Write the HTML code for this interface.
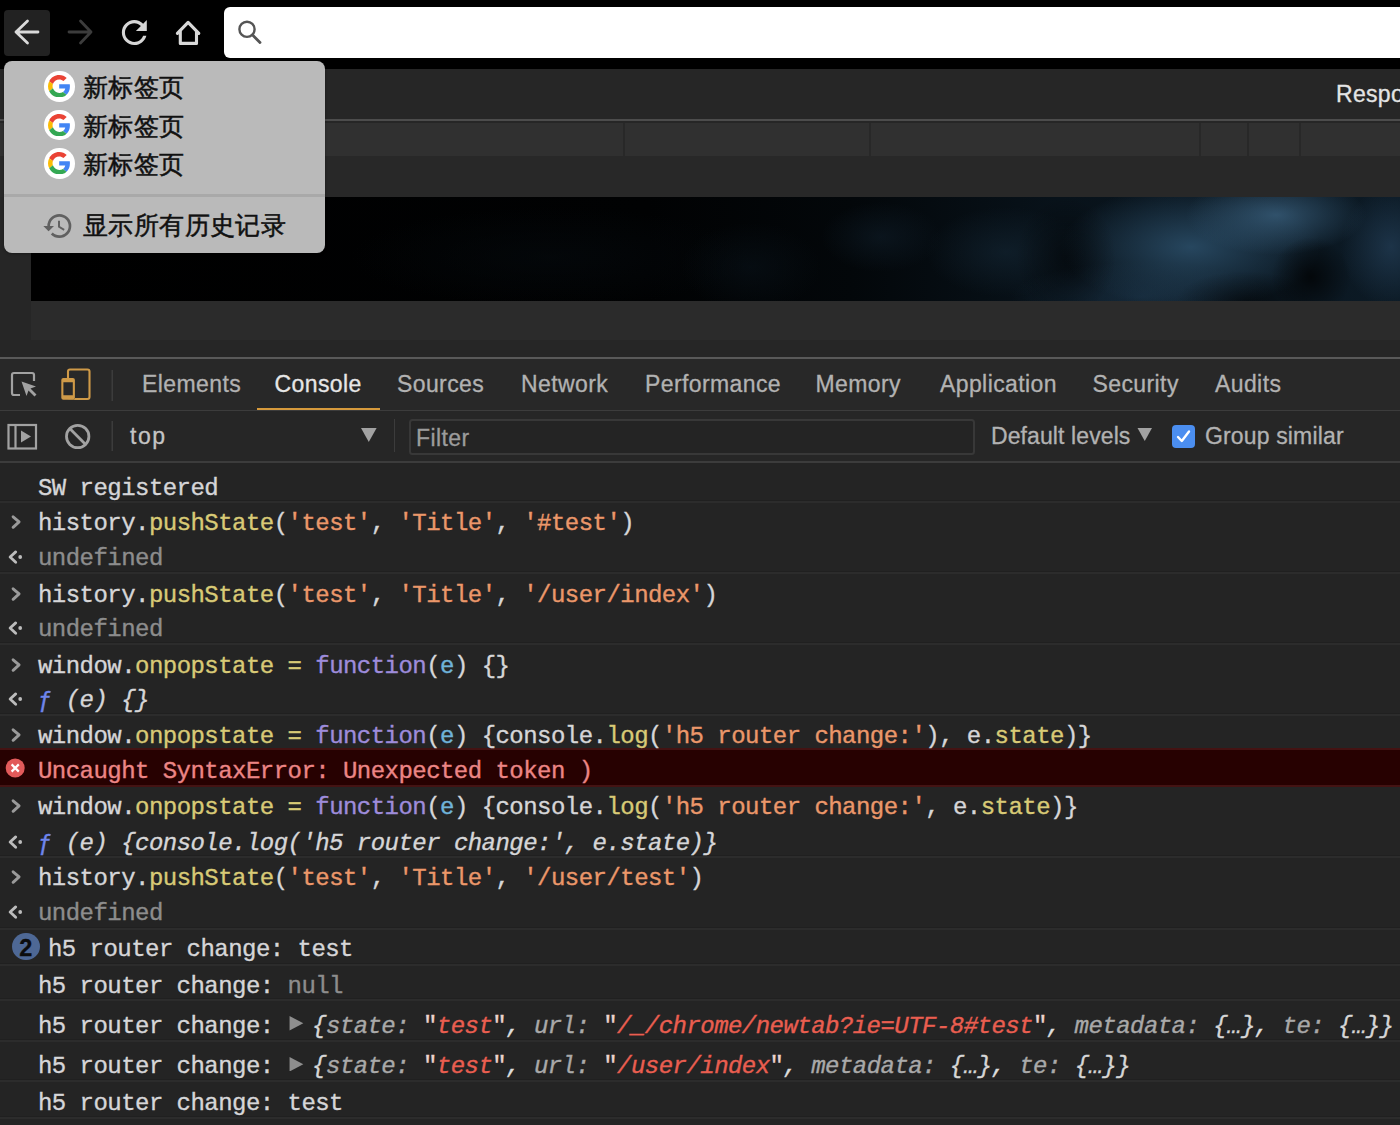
<!DOCTYPE html>
<html><head><meta charset="utf-8">
<style>
*{margin:0;padding:0;box-sizing:border-box}
html,body{width:1400px;height:1125px;overflow:hidden;background:#242424;font-family:"Liberation Sans",sans-serif}
.a{position:absolute}
.mono{font-family:"Liberation Mono",monospace;font-size:24px;letter-spacing:-0.54px;white-space:pre;line-height:26px;-webkit-text-stroke:0.35px currentColor}
.ln{position:absolute;color:#d6d6d8}
.sep{position:absolute;left:0;width:1400px;height:1px;background:#363636}
.wt{color:#d6d6d8}
.pr{color:#d8ca76}.st{color:#eb976a}.kw{color:#9e8cdb}.vr{color:#6fb3d9}.gy{color:#8d8d8d}
.fn{color:#6f86ec}
.it{font-style:italic;color:#d6d6d8}
.er{color:#ec8585}
.ok{color:#a9a9a9;font-style:italic}.oc{color:#dcdcdc;font-style:italic}.oq{color:#ecd3cd}.os{color:#ea5e50;font-style:italic}.ob{color:#d6d6d6;font-style:italic}
.tri{display:inline-block;width:24.5px;height:14.5px;vertical-align:2px;background:#8e8e8e;clip-path:polygon(2px 0,15.8px 7.25px,2px 14.5px)}
.tab{position:absolute;top:370.5px;font-size:23px;color:#b2b2b2;line-height:26px;white-space:pre;letter-spacing:0.4px;-webkit-text-stroke:0.3px currentColor}
.tb{font-size:23px;color:#b2b2b2;line-height:26px;white-space:pre;-webkit-text-stroke:0.3px currentColor}
.cn{font-size:25.2px;letter-spacing:0.4px;color:#111;line-height:30px;white-space:pre;-webkit-text-stroke:0.5px #111}
</style></head><body>
<div class="a" style="left:0;top:0;width:1400px;height:69px;background:#000"></div>
<div class="a" style="left:0;top:69px;width:1400px;height:288px;background:#262626"></div>
<!-- TOP BAR -->
<div class="a" style="left:4px;top:10px;width:46px;height:46px;background:#222;border-radius:4px"></div>
<svg class="a" style="left:0;top:0" width="224" height="69" viewBox="0 0 224 69">
 <g fill="none" stroke-width="2.8" stroke-linecap="round" stroke-linejoin="round">
  <path d="M16 32H38M27.5 21L16 32L27.5 43" stroke="#dadada"/>
  <path d="M69 32H91M80.5 21L91 32L80.5 43" stroke="#3c3c3c"/>
 </g>
 <g transform="translate(115.6,13.8) scale(1.56)" fill="#d6d6d6">
  <path d="M17.65 6.35C16.2 4.9 14.21 4 12 4c-4.42 0-7.99 3.580-7.990 8s3.570 8 7.990 8c3.730 0 6.840-2.550 7.730-6h-2.080c-.820 2.330-3.040 4-5.650 4-3.310 0-6-2.690-6-6s2.690-6 6-6c1.660 0 3.140.690 4.220 1.780L13 11h7V4l-2.350 2.350z"/>
 </g>
 <g fill="none" stroke="#d9d9d9" stroke-width="3.1" stroke-linecap="round" stroke-linejoin="round"><path d="M177.4 33.4L188.1 22.3L198.8 33.4"/><path d="M180.3 31.5V43.4H196.5V31.5"/></g>
</svg>
<div class="a" style="left:224px;top:7px;width:1200px;height:51px;background:#fff;border-radius:6px"></div>
<svg class="a" style="left:230px;top:14px" width="40" height="40" viewBox="230 14 40 40">
 <circle cx="247" cy="29.3" r="7.6" fill="none" stroke="#555" stroke-width="2.4"/>
 <path d="M252.6 35L260 42.6" stroke="#555" stroke-width="2.8" stroke-linecap="round"/>
</svg>

<!-- PAGE -->
<div class="a" style="left:0;top:119px;width:1400px;height:2.2px;background:#4c4c4c"></div>
<div class="a" style="left:0;top:123px;width:1400px;height:33px;background:#303030"></div>

<div class="a" style="left:623px;top:123px;width:2px;height:33px;background:#282828"></div>
<div class="a" style="left:869px;top:123px;width:2px;height:33px;background:#282828"></div>
<div class="a" style="left:1199px;top:123px;width:2px;height:33px;background:#282828"></div>
<div class="a" style="left:1247px;top:123px;width:2px;height:33px;background:#282828"></div>
<div class="a" style="left:1299px;top:123px;width:2px;height:33px;background:#282828"></div>
<div class="a" style="left:0;top:156px;width:1400px;height:41px;background:#282828"></div>
<div class="a" style="left:1336px;top:81px;font-size:23px;color:#e4e4e4;line-height:26px;letter-spacing:0.3px;-webkit-text-stroke:0.3px #e4e4e4">Respo</div>
<div class="a" style="left:31px;top:197px;width:1369px;height:104px;background:
 radial-gradient(40px 40px at 1280px 80px, rgba(0,0,0,.7), rgba(0,0,0,0)),
 radial-gradient(70px 30px at 1215px 104px, rgba(0,0,0,.5), rgba(0,0,0,0)),
 radial-gradient(50px 60px at 1035px 60px, rgba(0,0,0,.45), rgba(0,0,0,0)),
 radial-gradient(90px 40px at 1245px 18px, rgba(54,90,118,.85), rgba(54,90,118,0)),
 radial-gradient(130px 62px at 1160px 50px, rgba(42,76,102,.9), rgba(42,76,102,0)),
 radial-gradient(130px 35px at 1110px 100px, rgba(30,56,78,.6), rgba(30,56,78,0)),
 radial-gradient(50px 60px at 1360px 50px, rgba(34,60,84,.75), rgba(34,60,84,0)),
 radial-gradient(80px 45px at 975px 55px, rgba(20,38,52,.6), rgba(20,38,52,0)),
 radial-gradient(60px 35px at 850px 40px, rgba(16,30,42,.55), rgba(16,30,42,0)),
 radial-gradient(70px 45px at 720px 70px, rgba(10,20,28,.5), rgba(10,20,28,0)),
 radial-gradient(200px 50px at 520px 60px, rgba(5,10,14,.6), rgba(5,10,14,0)),
 linear-gradient(90deg,#000 0%,#010203 45%,#03070a 60%,#08121a 75%,#0c1a25 100%)"></div>
<div class="a" style="left:31px;top:301px;width:1369px;height:39px;background:#2b2b2b"></div>
<!-- MENU -->
<div class="a" style="left:4px;top:61px;width:321px;height:192px;background:#bababa;border-radius:8px;box-shadow:0 1px 3px rgba(0,0,0,.3)"></div>
<div class="a" style="left:4px;top:194px;width:321px;height:3px;background:#a9a9a9"></div>

<svg width="0" height="0" style="position:absolute"><defs>
<symbol id="g" viewBox="0 0 48 48">
<path fill="#EA4335" d="M24 9.5c3.54 0 6.71 1.22 9.21 3.6l6.85-6.85C35.9 2.38 30.47 0 24 0 14.62 0 6.51 5.38 2.56 13.22l7.98 6.19C12.43 13.72 17.74 9.5 24 9.5z"/>
<path fill="#4285F4" d="M46.98 24.55c0-1.57-.15-3.09-.38-4.55H24v9.02h12.94c-.58 2.960-2.260 5.480-4.780 7.180l7.730 6c4.510-4.180 7.090-10.360 7.090-17.650z"/>
<path fill="#FBBC05" d="M10.53 28.59c-.48-1.45-.76-2.99-.76-4.59s.27-3.14.76-4.59l-7.98-6.19C.92 16.46 0 20.12 0 24c0 3.88.92 7.54 2.56 10.78l7.97-6.19z"/>
<path fill="#34A853" d="M24 48c6.48 0 11.93-2.13 15.89-5.81l-7.73-6c-2.15 1.45-4.92 2.3-8.16 2.3-6.26 0-11.57-4.22-13.47-9.91l-7.98 6.19C6.51 42.62 14.62 48 24 48z"/>
</symbol></defs></svg>
<div class="a" style="left:44px;top:71px;width:30.6px;height:30.6px;border-radius:50%;background:#fff"></div>
<svg class="a" style="left:48.3px;top:75px" width="22.4" height="22.4"><use href="#g"/></svg>
<div class="a" style="left:44px;top:109.5px;width:30.6px;height:30.6px;border-radius:50%;background:#fff"></div>
<svg class="a" style="left:48.3px;top:113.5px" width="22.4" height="22.4"><use href="#g"/></svg>
<div class="a" style="left:44px;top:148px;width:30.6px;height:30.6px;border-radius:50%;background:#fff"></div>
<svg class="a" style="left:48.3px;top:152px" width="22.4" height="22.4"><use href="#g"/></svg>
<div class="a cn" style="left:83px;top:72px">新标签页</div>
<div class="a cn" style="left:83px;top:110.5px">新标签页</div>
<div class="a cn" style="left:83px;top:149px">新标签页</div>
<svg class="a" style="left:42px;top:210px" width="32" height="32" viewBox="0 0 24 24">
<path fill="#606060" d="M13 3a9 9 0 0 0-9 9H1l3.89 3.89.07.14L9 12H6c0-3.87 3.13-7 7-7s7 3.13 7 7-3.13 7-7 7c-1.93 0-3.68-.79-4.94-2.06l-1.42 1.42A8.954 8.954 0 0 0 13 21a9 9 0 0 0 0-18zm-1 5v5l4.28 2.54.72-1.21-3.5-2.08V8H12z"/>
</svg>
<div class="a cn" style="left:83px;top:209.5px">显示所有历史记录</div>

<!-- DEVTOOLS -->
<div class="a" style="left:0;top:359px;width:1400px;height:51px;background:#282828"></div>
<div class="a" style="left:0;top:411px;width:1400px;height:50px;background:#262626"></div>
<div class="a" style="left:0;top:357px;width:1400px;height:2px;background:#595959"></div>
<svg class="a" style="left:0;top:359px" width="120" height="100" viewBox="0 359 120 100">
 <g fill="none" stroke="#a2a2a2" stroke-width="2.2">
  <path d="M20 395H14a2 2 0 0 1-2-2V375a2 2 0 0 1 2-2H32a2 2 0 0 1 2 2V381"/>
 </g>
 <path fill="#a2a2a2" d="M21.5 381.5L36 386.5L30.5 388.5L36.5 394.5L34.5 396.5L28.5 390.5L26.5 396Z"/>
 <rect x="68" y="369.5" width="21.5" height="29.5" rx="2" fill="none" stroke="#cf9a48" stroke-width="2.1"/>
 <rect x="61.3" y="378" width="13.6" height="21.7" rx="2" fill="#282828"/>
 <path fill="#cf9a48" fill-rule="evenodd" d="M63.3 378H72.9A2 2 0 0 1 74.9 380V397.7A2 2 0 0 1 72.9 399.7H63.3A2 2 0 0 1 61.3 397.7V380A2 2 0 0 1 63.3 378Z M63.4 382.2V395.2H72.8V382.2Z"/>
 <rect x="111.5" y="370" width="1.5" height="31" fill="#3c3c3c"/>
 <g fill="none" stroke="#a2a2a2" stroke-width="2.2">
  <rect x="8.5" y="425" width="27.5" height="23.5"/>
  <path d="M15.5 425V448.5"/>
  <circle cx="77.7" cy="436.5" r="11.2" stroke-width="2.8"/>
  <path d="M70 428.8L85.4 444.2" stroke-width="2.8"/>
 </g>
 <path fill="#a2a2a2" d="M21 430.5L31 436.5L21 442.5Z"/>
 <rect x="111.5" y="421" width="1.5" height="30" fill="#3c3c3c"/>
</svg>
<div class="tab" style="left:142px">Elements</div>
<div class="tab" style="left:274.5px;color:#e6e6e6">Console</div>
<div class="tab" style="left:397px">Sources</div>
<div class="tab" style="left:521px">Network</div>
<div class="tab" style="left:645px">Performance</div>
<div class="tab" style="left:815.5px">Memory</div>
<div class="tab" style="left:940px">Application</div>
<div class="tab" style="left:1092.5px">Security</div>
<div class="tab" style="left:1215px">Audits</div>
<div class="a" style="left:257px;top:407.5px;width:123px;height:3px;background:#d69a3c"></div>
<div class="a" style="left:0;top:409.5px;width:1400px;height:1.5px;background:#3c3c3c"></div>
<div class="a tb" style="left:130px;top:422.5px;letter-spacing:1.5px;color:#c4c4c4">top</div>
<svg class="a" style="left:355px;top:420px" width="30" height="30" viewBox="355 420 30 30"><path d="M361 428H376.6L368.8 442Z" fill="#a2a2a2"/></svg>
<div class="a" style="left:393.6px;top:419px;width:1.8px;height:32.5px;background:#3c3c3c"></div>
<div class="a" style="left:408.8px;top:418.6px;width:566px;height:36px;border:2px solid #383838;border-radius:3.5px;background:#242424"></div>
<div class="a tb" style="left:416px;top:425px;color:#9c9c9c;letter-spacing:0.4px">Filter</div>
<div class="a tb" style="left:991px;top:423px;letter-spacing:0.1px">Default levels</div>
<svg class="a" style="left:1130px;top:420px" width="30" height="30" viewBox="1130 420 30 30"><path d="M1137.5 428H1152L1144.75 441Z" fill="#a2a2a2"/></svg>
<div class="a" style="left:1171.5px;top:424.5px;width:23px;height:23px;border-radius:4px;background:#4b8ef0"></div>
<svg class="a" style="left:1171.5px;top:424.5px" width="23" height="23" viewBox="0 0 23 23"><path d="M6 12L9.8 16L17 6.5" fill="none" stroke="#fff" stroke-width="2.4" stroke-linecap="round" stroke-linejoin="round"/></svg>
<div class="a tb" style="left:1205px;top:423px;letter-spacing:0.15px">Group similar</div>
<div class="a" style="left:0;top:461px;width:1400px;height:1.5px;background:#3c3c3c"></div>

<!-- CONSOLE -->
<div class="a" style="left:0;top:748.3px;width:1400px;height:39.2px;background:#270101;border-top:2px solid #441313;border-bottom:2px solid #441313"></div>
<div class="sep" style="top:500px;height:1px;background:#202020"></div><div class="sep" style="top:501px;height:2px;background:#2c2c2c"></div>
<div class="sep" style="top:570.5px;height:1px;background:#202020"></div><div class="sep" style="top:571.5px;height:2px;background:#2c2c2c"></div>
<div class="sep" style="top:641.5px;height:1px;background:#202020"></div><div class="sep" style="top:642.5px;height:2px;background:#2c2c2c"></div>
<div class="sep" style="top:712.5px;height:1px;background:#202020"></div><div class="sep" style="top:713.5px;height:2px;background:#2c2c2c"></div>
<div class="sep" style="top:854.5px;height:1px;background:#202020"></div><div class="sep" style="top:855.5px;height:2px;background:#2c2c2c"></div>
<div class="sep" style="top:926.5px;height:1px;background:#202020"></div><div class="sep" style="top:927.5px;height:2px;background:#2c2c2c"></div>
<div class="sep" style="top:963px;height:1px;background:#202020"></div><div class="sep" style="top:964px;height:2px;background:#2c2c2c"></div>
<div class="sep" style="top:998px;height:1px;background:#202020"></div><div class="sep" style="top:999px;height:2px;background:#2c2c2c"></div>
<div class="sep" style="top:1039px;height:1px;background:#202020"></div><div class="sep" style="top:1040px;height:2px;background:#2c2c2c"></div>
<div class="sep" style="top:1079px;height:1px;background:#202020"></div><div class="sep" style="top:1080px;height:2px;background:#2c2c2c"></div>
<div class="sep" style="top:1116px;height:1px;background:#202020"></div><div class="sep" style="top:1117px;height:2px;background:#2c2c2c"></div>
<div class="ln mono" style="top:475.8px;left:38.0px"><span class="wt">SW registered</span></div>
<div class="ln mono" style="top:511.2px;left:38.0px"><span class="wt">history.</span><span class="pr">pushState</span><span class="wt">(</span><span class="st">&#x27;test&#x27;</span><span class="wt">, </span><span class="st">&#x27;Title&#x27;</span><span class="wt">, </span><span class="st">&#x27;#test&#x27;</span><span class="wt">)</span></div>
<svg class="a" style="left:8px;top:512.2px" width="16" height="18" viewBox="0 0 16 18"><path d="M5.1 4.8L11.1 9.9L5.1 15.3" fill="none" stroke="#9a9a9a" stroke-width="2.9" stroke-linecap="round" stroke-linejoin="round"/></svg>
<div class="ln mono" style="top:545.8px;left:38.0px"><span class="gy">undefined</span></div>
<svg class="a" style="left:6px;top:547.8px" width="20" height="18" viewBox="0 0 20 18"><path d="M9.7 3.9L4.1 9.0L9.7 14.3" fill="none" stroke="#bcbcbc" stroke-width="2.8" stroke-linecap="round" stroke-linejoin="round"/><circle cx="14.2" cy="9.0" r="1.9" fill="#bcbcbc"/></svg>
<div class="ln mono" style="top:582.5px;left:38.0px"><span class="wt">history.</span><span class="pr">pushState</span><span class="wt">(</span><span class="st">&#x27;test&#x27;</span><span class="wt">, </span><span class="st">&#x27;Title&#x27;</span><span class="wt">, </span><span class="st">&#x27;/user/index&#x27;</span><span class="wt">)</span></div>
<svg class="a" style="left:8px;top:583.5px" width="16" height="18" viewBox="0 0 16 18"><path d="M5.1 4.8L11.1 9.9L5.1 15.3" fill="none" stroke="#9a9a9a" stroke-width="2.9" stroke-linecap="round" stroke-linejoin="round"/></svg>
<div class="ln mono" style="top:616.8px;left:38.0px"><span class="gy">undefined</span></div>
<svg class="a" style="left:6px;top:618.8px" width="20" height="18" viewBox="0 0 20 18"><path d="M9.7 3.9L4.1 9.0L9.7 14.3" fill="none" stroke="#bcbcbc" stroke-width="2.8" stroke-linecap="round" stroke-linejoin="round"/><circle cx="14.2" cy="9.0" r="1.9" fill="#bcbcbc"/></svg>
<div class="ln mono" style="top:654.1px;left:38.0px"><span class="wt">window.</span><span class="pr">onpopstate</span><span class="pr"> = </span><span class="kw">function</span><span class="wt">(</span><span class="vr">e</span><span class="wt">) {}</span></div>
<svg class="a" style="left:8px;top:655.1px" width="16" height="18" viewBox="0 0 16 18"><path d="M5.1 4.8L11.1 9.9L5.1 15.3" fill="none" stroke="#9a9a9a" stroke-width="2.9" stroke-linecap="round" stroke-linejoin="round"/></svg>
<div class="ln mono" style="top:687.9px;left:38.0px"><span class="fn">ƒ</span><span class="it"> (e) {}</span></div>
<svg class="a" style="left:6px;top:689.9px" width="20" height="18" viewBox="0 0 20 18"><path d="M9.7 3.9L4.1 9.0L9.7 14.3" fill="none" stroke="#bcbcbc" stroke-width="2.8" stroke-linecap="round" stroke-linejoin="round"/><circle cx="14.2" cy="9.0" r="1.9" fill="#bcbcbc"/></svg>
<div class="ln mono" style="top:724.2px;left:38.0px"><span class="wt">window.</span><span class="pr">onpopstate</span><span class="pr"> = </span><span class="kw">function</span><span class="wt">(</span><span class="vr">e</span><span class="wt">) {console.</span><span class="pr">log</span><span class="wt">(</span><span class="st">&#x27;h5 router change:&#x27;</span><span class="wt">), e.</span><span class="pr">state</span><span class="wt">)}</span></div>
<svg class="a" style="left:8px;top:725.2px" width="16" height="18" viewBox="0 0 16 18"><path d="M5.1 4.8L11.1 9.9L5.1 15.3" fill="none" stroke="#9a9a9a" stroke-width="2.9" stroke-linecap="round" stroke-linejoin="round"/></svg>
<div class="ln mono" style="top:758.8px;left:38.0px"><span class="er">Uncaught SyntaxError: Unexpected token )</span></div>
<svg class="a" style="left:5px;top:758.3px" width="20" height="20" viewBox="0 0 20 20"><circle cx="10.2" cy="10" r="9.5" fill="#e25a5a"/><path d="M6.6 6.4L13.8 13.6M13.8 6.4L6.6 13.6" stroke="#fff" stroke-width="2.2"/></svg>
<div class="ln mono" style="top:795.0px;left:38.0px"><span class="wt">window.</span><span class="pr">onpopstate</span><span class="pr"> = </span><span class="kw">function</span><span class="wt">(</span><span class="vr">e</span><span class="wt">) {console.</span><span class="pr">log</span><span class="wt">(</span><span class="st">&#x27;h5 router change:&#x27;</span><span class="wt">, e.</span><span class="pr">state</span><span class="wt">)}</span></div>
<svg class="a" style="left:8px;top:796.0px" width="16" height="18" viewBox="0 0 16 18"><path d="M5.1 4.8L11.1 9.9L5.1 15.3" fill="none" stroke="#9a9a9a" stroke-width="2.9" stroke-linecap="round" stroke-linejoin="round"/></svg>
<div class="ln mono" style="top:830.5px;left:38.0px"><span class="fn">ƒ</span><span class="it"> (e) {console.log(&#x27;h5 router change:&#x27;, e.state)}</span></div>
<svg class="a" style="left:6px;top:832.5px" width="20" height="18" viewBox="0 0 20 18"><path d="M9.7 3.9L4.1 9.0L9.7 14.3" fill="none" stroke="#bcbcbc" stroke-width="2.8" stroke-linecap="round" stroke-linejoin="round"/><circle cx="14.2" cy="9.0" r="1.9" fill="#bcbcbc"/></svg>
<div class="ln mono" style="top:866.2px;left:38.0px"><span class="wt">history.</span><span class="pr">pushState</span><span class="wt">(</span><span class="st">&#x27;test&#x27;</span><span class="wt">, </span><span class="st">&#x27;Title&#x27;</span><span class="wt">, </span><span class="st">&#x27;/user/test&#x27;</span><span class="wt">)</span></div>
<svg class="a" style="left:8px;top:867.2px" width="16" height="18" viewBox="0 0 16 18"><path d="M5.1 4.8L11.1 9.9L5.1 15.3" fill="none" stroke="#9a9a9a" stroke-width="2.9" stroke-linecap="round" stroke-linejoin="round"/></svg>
<div class="ln mono" style="top:900.8px;left:38.0px"><span class="gy">undefined</span></div>
<svg class="a" style="left:6px;top:902.8px" width="20" height="18" viewBox="0 0 20 18"><path d="M9.7 3.9L4.1 9.0L9.7 14.3" fill="none" stroke="#bcbcbc" stroke-width="2.8" stroke-linecap="round" stroke-linejoin="round"/><circle cx="14.2" cy="9.0" r="1.9" fill="#bcbcbc"/></svg>
<div class="ln mono" style="top:937.1px;left:48.0px"><span class="wt">h5 router change: test</span></div>
<div class="a" style="left:11.8px;top:932.8px;width:28px;height:27.5px;border-radius:50%;background:#4e6895"></div><div class="a" style="left:11.8px;top:934.6px;width:28px;height:27.5px;color:#0c0c0c;font-weight:bold;font-size:23.5px;line-height:27.5px;text-align:center;-webkit-text-stroke:0.3px #0c0c0c">2</div>
<div class="ln mono" style="top:974.2px;left:38.0px"><span class="wt">h5 router change: </span><span class="gy">null</span></div>
<div class="ln mono" style="top:1013.6px;left:38.0px"><span class="wt">h5 router change: </span><span class="tri"></span><span class="ob">{</span><span class="ok">state</span><span class="ok">: </span><span class="oq">&quot;</span><span class="os">test</span><span class="oq">&quot;</span><span class="oc">, </span><span class="ok">url</span><span class="ok">: </span><span class="oq">&quot;</span><span class="os">/_/chrome/newtab?ie=UTF-8#test</span><span class="oq">&quot;</span><span class="oc">, </span><span class="ok">metadata</span><span class="ok">: </span><span class="ob">{…}</span><span class="oc">, </span><span class="ok">te</span><span class="ok">: </span><span class="ob">{…}}</span></div>
<div class="ln mono" style="top:1054.4px;left:38.0px"><span class="wt">h5 router change: </span><span class="tri"></span><span class="ob">{</span><span class="ok">state</span><span class="ok">: </span><span class="oq">&quot;</span><span class="os">test</span><span class="oq">&quot;</span><span class="oc">, </span><span class="ok">url</span><span class="ok">: </span><span class="oq">&quot;</span><span class="os">/user/index</span><span class="oq">&quot;</span><span class="oc">, </span><span class="ok">metadata</span><span class="ok">: </span><span class="ob">{…}</span><span class="oc">, </span><span class="ok">te</span><span class="ok">: </span><span class="ob">{…}}</span></div>
<div class="ln mono" style="top:1091.0px;left:38.0px"><span class="wt">h5 router change: test</span></div>
</body></html>
